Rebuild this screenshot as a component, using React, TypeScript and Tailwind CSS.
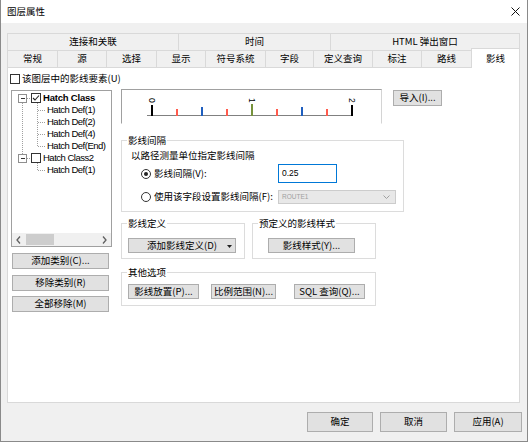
import React from "react";

const Btn = ({ children, className = "" }: { children: React.ReactNode; className?: string }) => (
  <div
    className={`flex items-center justify-center bg-[#e1e1e1] border border-[#adadad] leading-none whitespace-nowrap shrink-0 ${className}`}
  >
    {children}
  </div>
);

const Check = ({ checked = false }: { checked?: boolean }) => (
  <div className="w-[10px] h-[10px] border border-[#333333] bg-white flex items-center justify-center shrink-0">
    {checked && (
      <svg width="8" height="8" viewBox="0 0 8 8">
        <path d="M1 4 L3 6 L7 1.5" fill="none" stroke="#222" strokeWidth="1.1" />
      </svg>
    )}
  </div>
);

const Radio = ({ checked = false }: { checked?: boolean }) => (
  <div className="w-[10px] h-[10px] rounded-full border border-[#333333] bg-white flex items-center justify-center shrink-0">
    {checked && <div className="w-[4px] h-[4px] rounded-full bg-[#222222]" />}
  </div>
);

const row1 = [
  { label: "连接和关联", w: "w-[171px]" },
  { label: "时间", w: "w-[152px]" },
  { label: "HTML 弹出窗口", w: "w-[190px] border-r" },
];

const row2 = [
  { label: "常规", w: "w-[50px]" },
  { label: "源", w: "w-[49px]" },
  { label: "选择", w: "w-[50px]" },
  { label: "显示", w: "w-[49px]" },
  { label: "符号系统", w: "w-[60px]" },
  { label: "字段", w: "w-[48px]" },
  { label: "定义查询", w: "w-[59px]" },
  { label: "标注", w: "w-[49px]" },
  { label: "路线", w: "w-[50px]" },
];

const ticks = [
  { x: 30, c: "#000000", t: 15 },
  { x: 55, c: "#ff5b4d", t: 19 },
  { x: 80, c: "#1f5fbf", t: 17 },
  { x: 105, c: "#ff5b4d", t: 19 },
  { x: 130, c: "#76923c", t: 14 },
  { x: 155, c: "#ff5b4d", t: 19 },
  { x: 180, c: "#1f5fbf", t: 17 },
  { x: 205, c: "#ff5b4d", t: 19 },
  { x: 230, c: "#000000", t: 15 },
];

export default function App() {
  return (
    <div className="w-[528px] h-[442px] bg-[#f0f0f0] border-x border-b border-[#8a8a8a] flex flex-col overflow-hidden text-[9.5px] text-black font-['Noto_Sans_CJK_SC',sans-serif]">
      {/* title bar */}
      <div className="h-[23px] bg-white flex items-center justify-between pl-[6px] pr-[7px] shrink-0">
        <span className="leading-none">图层属性</span>
        <svg width="9" height="9" viewBox="0 0 9 9">
          <path d="M0.5 0.5 L8.5 8.5 M8.5 0.5 L0.5 8.5" stroke="#111" strokeWidth="1" />
        </svg>
      </div>

      {/* tabs */}
      <div className="mt-[10px] ml-[6px] w-[513px] flex flex-col shrink-0">
        <div className="flex h-[17px]">
          {row1.map((t) => (
            <div
              key={t.label}
              className={`h-[17px] border-l border-t border-[#d9d9d9] flex items-center justify-center leading-none ${t.w}`}
            >
              {t.label}
            </div>
          ))}
        </div>
        <div className="flex h-[17px] items-start">
          {row2.map((t) => (
            <div
              key={t.label}
              className={`h-[17px] border-l border-t border-[#d9d9d9] flex items-center justify-center leading-none ${t.w}`}
            >
              {t.label}
            </div>
          ))}
          <div className="relative z-10 -mt-[2px] h-[20px] w-[49px] bg-white border-l border-t border-r border-[#d9d9d9] flex items-center justify-center leading-none">
            影线
          </div>
        </div>
      </div>

      {/* panel */}
      <div className="ml-[6px] w-[513px] h-[336px] border border-[#d9d9d9] bg-white flex flex-col shrink-0">
        <div className="mt-[6px] ml-[2px] flex items-center h-[10px]">
          <Check />
          <span className="ml-[2px] leading-none">该图层中的影线要素(U)</span>
        </div>

        <div className="mt-[5px] flex items-start">
          {/* left column */}
          <div className="ml-[3px] w-[101px] flex flex-col">
            <div className="mt-[1px] h-[157px] border border-[#a0a0a0] bg-white relative flex flex-col font-['Liberation_Sans',Arial,sans-serif]">
              <svg className="absolute left-0 top-0" width="99" height="90" shapeRendering="crispEdges">
                <g stroke="#a0a0a0" strokeDasharray="1 1" fill="none">
                  <line x1="10.5" y1="12" x2="10.5" y2="63" />
                  <line x1="15" y1="7.5" x2="19" y2="7.5" />
                  <line x1="15" y1="67.5" x2="19" y2="67.5" />
                  <line x1="25.5" y1="12" x2="25.5" y2="56" />
                  <line x1="26" y1="19.5" x2="33" y2="19.5" />
                  <line x1="26" y1="31.5" x2="33" y2="31.5" />
                  <line x1="26" y1="43.5" x2="33" y2="43.5" />
                  <line x1="26" y1="55.5" x2="33" y2="55.5" />
                  <line x1="25.5" y1="72" x2="25.5" y2="80" />
                  <line x1="26" y1="79.5" x2="33" y2="79.5" />
                </g>
                <g>
                  <rect x="6.5" y="3.5" width="8" height="8" fill="#fff" stroke="#8f8f8f" />
                  <line x1="8.5" y1="7.5" x2="13" y2="7.5" stroke="#333" />
                  <rect x="6.5" y="63.5" width="8" height="8" fill="#fff" stroke="#8f8f8f" />
                  <line x1="8.5" y1="67.5" x2="13" y2="67.5" stroke="#333" />
                </g>
              </svg>
              <div className="relative pt-[1px] flex flex-col">
                <div className="h-[12px] flex items-center pl-[19px]">
                  <Check checked />
                  <span className="ml-[2px] text-[9.5px] font-bold tracking-[-0.2px] leading-none">Hatch Class</span>
                </div>
                {["Hatch Def(1)", "Hatch Def(2)", "Hatch Def(4)", "Hatch Def(End)"].map((s) => (
                  <div key={s} className="h-[12px] flex items-center pl-[35px] text-[9.5px] tracking-[-0.5px] leading-none">
                    {s}
                  </div>
                ))}
                <div className="h-[12px] flex items-center pl-[19px]">
                  <Check />
                  <span className="ml-[2px] text-[9.5px] tracking-[-0.5px] leading-none">Hatch Class2</span>
                </div>
                <div className="h-[12px] flex items-center pl-[35px] text-[9.5px] tracking-[-0.5px] leading-none">
                  Hatch Def(1)
                </div>
              </div>
              <div className="mt-auto h-[13px] bg-[#f0f0f0] flex items-center">
                <div className="w-[13px] flex items-center justify-center">
                  <svg width="5" height="8" viewBox="0 0 5 8">
                    <path d="M4 0.5 L1 4 L4 7.5" fill="none" stroke="#606060" strokeWidth="1.3" />
                  </svg>
                </div>
                <div className="ml-[1px] w-[28px] h-[11px] bg-[#cdcdcd]" />
                <div className="flex-1" />
                <div className="w-[13px] flex items-center justify-center">
                  <svg width="5" height="8" viewBox="0 0 5 8">
                    <path d="M1 0.5 L4 4 L1 7.5" fill="none" stroke="#606060" strokeWidth="1.3" />
                  </svg>
                </div>
              </div>
            </div>
            <Btn className="mt-[6px] ml-[1px] w-[97px] h-[16px]">添加类别(C)...</Btn>
            <Btn className="mt-[6px] ml-[1px] w-[97px] h-[16px]">移除类别(R)</Btn>
            <Btn className="mt-[5px] ml-[1px] w-[97px] h-[16px]">全部移除(M)</Btn>
          </div>

          {/* right column */}
          <div className="ml-[9px] flex flex-col">
            <div className="flex items-start h-[35px]">
              <div className="w-[261px] h-[35px] border-t border-l border-[#a0a0a0] border-r-[#d4d4d4] border-r border-b border-b-[#ffffff] bg-white">
                <svg width="259" height="33" className="block" shapeRendering="crispEdges">
                  <line x1="25" y1="25.5" x2="231" y2="25.5" stroke="#808080" />
                  {ticks.map((t) => (
                    <rect key={t.x} x={t.x - 1} y={t.t} width="2" height={26 - t.t} fill={t.c} />
                  ))}
                  {[
                    { x: 30, s: "0" },
                    { x: 130, s: "1" },
                    { x: 230, s: "2" },
                  ].map((l) => (
                    <text
                      key={l.s}
                      transform={`translate(${l.x},8) rotate(90)`}
                      fontSize="8.5"
                      fontFamily="Liberation Sans, Arial, sans-serif"
                      dominantBaseline="central"
                      fill="#000"
                      shapeRendering="auto"
                    >
                      {l.s}
                    </text>
                  ))}
                </svg>
              </div>
              <Btn className="ml-[11px] mt-[1px] w-[49px] h-[16px]">导入(I)...</Btn>
            </div>

            <fieldset className="mt-[10px] w-[283px] border border-[#dcdcdc] pb-[7px]">
              <legend className="ml-[5px] px-[1px] leading-[12px]">影线间隔</legend>
              <div className="mt-[3px] pl-[9px] leading-[12px]">以路径测量单位指定影线间隔</div>
              <div className="mt-[3px] h-[19px] flex items-center pl-[19px]">
                <Radio checked />
                <span className="ml-[3px] w-[124px] leading-none">影线间隔(V):</span>
                <div className="w-[59px] h-[19px] border border-[#0078d7] bg-white flex items-center pl-[3px] text-[8.5px] leading-none font-['Liberation_Sans',Arial,sans-serif]">
                  0.25
                </div>
              </div>
              <div className="mt-[7px] h-[14px] flex items-center pl-[19px]">
                <Radio />
                <span className="ml-[3px] w-[124px] leading-none">使用该字段设置影线间隔(F):</span>
                <div className="w-[118px] h-[14px] border border-[#cccccc] bg-[#e8e8e8] flex items-center pl-[3px] pr-[5px]">
                  <span className="flex-1 text-[6.5px] text-[#a0a0a0] leading-none font-['Liberation_Sans',Arial,sans-serif]">
                    ROUTE1
                  </span>
                  <svg width="7" height="4" viewBox="0 0 7 4">
                    <path d="M0.5 0.5 L3.5 3.5 L6.5 0.5" fill="none" stroke="#a0a0a0" strokeWidth="1" />
                  </svg>
                </div>
              </div>
            </fieldset>

            <div className="mt-[5px] flex items-start">
              <fieldset className="w-[124px] border border-[#dcdcdc] pb-[5px]">
                <legend className="ml-[5px] px-[1px] leading-[12px]">影线定义</legend>
                <Btn className="relative mt-[9px] ml-[6px] w-[108px] h-[15px]">
                  添加影线定义(D)
                  <svg className="absolute right-[3px] top-[6px]" width="5" height="3" viewBox="0 0 5 3">
                    <path d="M0 0 L5 0 L2.5 3 Z" fill="#222" />
                  </svg>
                </Btn>
              </fieldset>
              <fieldset className="ml-[7px] w-[124px] border border-[#dcdcdc] pb-[5px]">
                <legend className="ml-[5px] px-[1px] leading-[12px]">预定义的影线样式</legend>
                <Btn className="mt-[9px] ml-[15px] w-[87px] h-[15px]">影线样式(Y)...</Btn>
              </fieldset>
            </div>

            <fieldset className="mt-[7px] w-[255px] border border-[#dcdcdc] pb-[6px]">
              <legend className="ml-[5px] px-[1px] leading-[12px]">其他选项</legend>
              <div className="mt-[6px] flex items-center">
                <Btn className="ml-[6px] w-[71px] h-[15px]">影线放置(P)...</Btn>
                <Btn className="ml-[12px] w-[65px] h-[15px]">比例范围(N)...</Btn>
                <Btn className="ml-[18px] w-[71px] h-[15px]">SQL 查询(Q)...</Btn>
              </div>
            </fieldset>
          </div>
        </div>
      </div>

      {/* bottom buttons */}
      <div className="mt-[9px] flex justify-end gap-[7px] pr-[5px]">
        <Btn className="w-[66px] h-[20px] border-[#0078d7]">确定</Btn>
        <Btn className="w-[67px] h-[20px]">取消</Btn>
        <Btn className="w-[68px] h-[20px]">应用(A)</Btn>
      </div>
    </div>
  );
}
